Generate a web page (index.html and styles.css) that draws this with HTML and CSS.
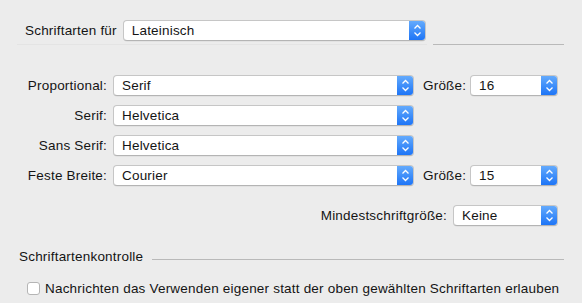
FILE: index.html
```html
<!DOCTYPE html>
<html>
<head>
	<title>Schriftarten</title>
	<link rel="stylesheet" href="styles.css">
</head>
<body>
	<div id="panel">
		<div class="top-row">
			<span class="label">Schriftarten für</span>
			<div class="popup wide-top"><span>Lateinisch</span><i class="stepper"><svg width="17" height="21" viewBox="0 0 17 21"><path d="M5.5 8.5 L8.5 5.5 L11.5 8.5 M5.5 12.5 L8.5 15.5 L11.5 12.5" fill="none" stroke="#fff" stroke-width="1.3"/></svg></i></div>
		</div>
		<div class="sep">
			<div class="sep-light"></div>
			<div class="sep-dark"></div>
		</div>

		<div class="fonts">
			<div class="row">
				<span class="label rlabel">Proportional:</span>
				<div class="popup main"><span>Serif</span><i class="stepper"><svg width="17" height="21" viewBox="0 0 17 21"><path d="M5.5 8.5 L8.5 5.5 L11.5 8.5 M5.5 12.5 L8.5 15.5 L11.5 12.5" fill="none" stroke="#fff" stroke-width="1.3"/></svg></i></div>
				<span class="label size-label">Größe:</span>
				<div class="popup size"><span>16</span><i class="stepper"><svg width="17" height="21" viewBox="0 0 17 21"><path d="M5.5 8.5 L8.5 5.5 L11.5 8.5 M5.5 12.5 L8.5 15.5 L11.5 12.5" fill="none" stroke="#fff" stroke-width="1.3"/></svg></i></div>
			</div>
			<div class="row">
				<span class="label rlabel">Serif:</span>
				<div class="popup main"><span>Helvetica</span><i class="stepper"><svg width="17" height="21" viewBox="0 0 17 21"><path d="M5.5 8.5 L8.5 5.5 L11.5 8.5 M5.5 12.5 L8.5 15.5 L11.5 12.5" fill="none" stroke="#fff" stroke-width="1.3"/></svg></i></div>
			</div>
			<div class="row">
				<span class="label rlabel">Sans Serif:</span>
				<div class="popup main"><span>Helvetica</span><i class="stepper"><svg width="17" height="21" viewBox="0 0 17 21"><path d="M5.5 8.5 L8.5 5.5 L11.5 8.5 M5.5 12.5 L8.5 15.5 L11.5 12.5" fill="none" stroke="#fff" stroke-width="1.3"/></svg></i></div>
			</div>
			<div class="row">
				<span class="label rlabel">Feste Breite:</span>
				<div class="popup main"><span>Courier</span><i class="stepper"><svg width="17" height="21" viewBox="0 0 17 21"><path d="M5.5 8.5 L8.5 5.5 L11.5 8.5 M5.5 12.5 L8.5 15.5 L11.5 12.5" fill="none" stroke="#fff" stroke-width="1.3"/></svg></i></div>
				<span class="label size-label">Größe:</span>
				<div class="popup size"><span>15</span><i class="stepper"><svg width="17" height="21" viewBox="0 0 17 21"><path d="M5.5 8.5 L8.5 5.5 L11.5 8.5 M5.5 12.5 L8.5 15.5 L11.5 12.5" fill="none" stroke="#fff" stroke-width="1.3"/></svg></i></div>
			</div>
		</div>

		<div class="min-row">
			<span class="label">Mindestschriftgröße:</span>
			<div class="popup min"><span>Keine</span><i class="stepper"><svg width="17" height="21" viewBox="0 0 17 21"><path d="M5.5 8.5 L8.5 5.5 L11.5 8.5 M5.5 12.5 L8.5 15.5 L11.5 12.5" fill="none" stroke="#fff" stroke-width="1.3"/></svg></i></div>
		</div>

		<div class="section">
			<span class="label">Schriftartenkontrolle</span>
			<div class="section-line"></div>
		</div>

		<label class="check-row">
			<span class="checkbox"></span>
			<span class="label">Nachrichten das Verwenden eigener statt der oben gewählten Schriftarten erlauben</span>
		</label>
	</div>
</body>
</html>
```

FILE: styles.css
```css
*{
	margin: 0;
	padding: 0;
	box-sizing: border-box;
}
body{
	background: #ececec;
	font-family: "Liberation Sans", Arial, sans-serif;
	font-size: 13.5px;
	letter-spacing: 0.2px;
	color: #141414;
}
#panel{
	width: 582px;
	height: 303px;
	display: flex;
	flex-direction: column;
}
.label{
	white-space: nowrap;
	line-height: 21px;
}

/* popup menu */
.popup{
	height: 21px;
	display: flex;
	align-items: center;
	background: #fff;
	border: 1px solid #c6c6c6;
	border-bottom-color: #b4b4b4;
	border-radius: 4px;
	overflow: hidden;
	box-shadow: 0 0.5px 0.5px rgba(0,0,0,0.08);
}
.popup span{
	flex: 1;
	padding-left: 8px;
	line-height: 19px;
}
.stepper{
	width: 17px;
	height: 21px;
	margin: -1px -1px -1px 0;
	background: linear-gradient(#67adfd, #1a72f6);
	display: flex;
}

.top-row{
	display: flex;
	align-items: center;
	gap: 6px;
	padding: 20px 0 0 25px;
}
.wide-top{
	width: 303px;
}
.sep{
	display: flex;
	gap: 6px;
	padding: 3px 0 0 17px;
}
.sep-light{
	width: 410px;
	height: 1px;
	background: #e4e4e4;
}
.sep-dark{
	width: 131px;
	height: 1px;
	background: #b9b9b9;
}

.fonts{
	display: flex;
	flex-direction: column;
	gap: 9px;
	padding-top: 30px;
}
.row{
	display: flex;
	align-items: center;
}
.rlabel{
	width: 113px;
	text-align: right;
	padding-right: 6px;
}
.main{
	width: 301px;
}
.size-label{
	width: 47px;
	margin-left: 9px;
}
.size{
	width: 88px;
}

.min-row{
	display: flex;
	justify-content: flex-end;
	align-items: center;
	gap: 6px;
	padding: 19px 24px 0 0;
}
.min{
	width: 105px;
}

.section{
	display: flex;
	align-items: center;
	gap: 9px;
	padding: 20px 18px 0 19px;
}
.section-line{
	flex: 1;
	height: 1px;
	background: #b9b9b9;
	margin-top: 5px;
}

.check-row{
	display: flex;
	align-items: center;
	gap: 5px;
	padding: 11px 0 0 27px;
}
.checkbox{
	width: 13px;
	height: 13px;
	background: #fff;
	border: 1px solid #b5b5b5;
	border-radius: 3px;
}
```
